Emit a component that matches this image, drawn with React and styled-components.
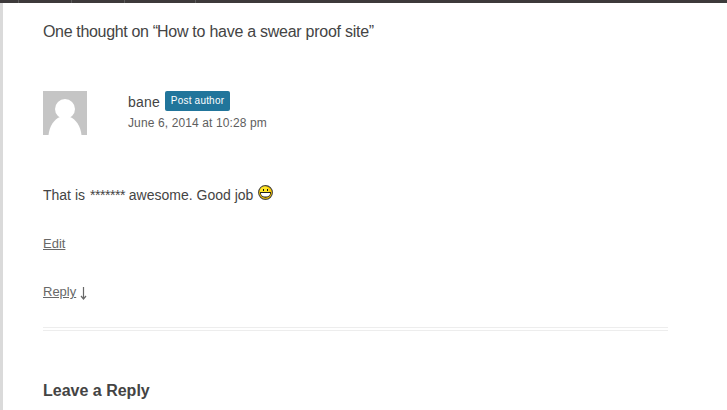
import React from 'react';
import styled, { createGlobalStyle } from 'styled-components';

const GlobalStyle = createGlobalStyle`
  * { box-sizing: border-box; }
  body {
    margin: 0;
    overflow: hidden;
    background: #fff;
    color: #444;
    font: 14px/24px "Liberation Sans", Arial, sans-serif;
  }
`;

const Page = styled.div`
  display: flex;
  flex-direction: column;
  width: 727px;
  height: 410px;
`;

const AdminBar = styled.div`
  display: flex;
  flex: none;
  height: 3px;
  background: #3d3a3b;
`;

const BarItem = styled.div`
  width: ${(p) => p.$width}px;
  border-right: 1px solid #5b5b5b;
`;

const Content = styled.main`
  flex: 1;
  min-height: 0;
  border-left: 3px solid #dadada;
  padding: 17px 59px 0 40px;
`;

const Title = styled.h2`
  margin: 0 0 47px;
  font-size: 16px;
  font-weight: 400;
  line-height: 24px;
  white-space: nowrap;
  letter-spacing: -0.26px;
`;

const Quote = styled.span`
  letter-spacing: -1.2px;
`;

const Lead = styled.span`
  letter-spacing: -0.33px;
`;

const CommentHeader = styled.header`
  display: flex;
  gap: 41px;
  height: 92px;
`;

const Avatar = styled.svg`
  display: block;
  flex: none;
  width: 44px;
  height: 44px;
`;

const AuthorLine = styled.div`
  display: flex;
  gap: 5px;
  height: 20px;
  line-height: 22px;
`;

const AuthorName = styled.span`
  width: 32px;
  letter-spacing: 0.2px;
`;

const Badge = styled.span`
  width: 65px;
  height: 20px;
  border-radius: 2px;
  background: #21759b;
  color: #fff;
  font-size: 10px;
  line-height: 20px;
  letter-spacing: 0.2px;
  text-align: center;
  white-space: nowrap;
`;

const Time = styled.time`
  display: block;
  color: #5e5e5e;
  font-size: 12px;
  line-height: 24px;
  letter-spacing: 0.12px;
`;

const CommentText = styled.p`
  display: flex;
  margin: 0 0 25px;
  height: 24px;
  white-space: pre;
`;

const Message = styled.span`
  width: 215px;
`;

const Censored = styled.span`
  margin-left: 1px;
  letter-spacing: -0.45px;
`;

const Smiley = styled.svg`
  width: 15px;
  height: 15px;
  margin-top: 2px;
`;

const Action = styled.div`
  display: flex;
  gap: 4px;
  height: 24px;
  margin-bottom: 24px;
  color: #686868;
  font-size: 13px;
`;

const ActionLink = styled.a`
  color: #686868;
  text-decoration: underline;
`;

const Arrow = styled.svg`
  width: 7px;
  height: 13px;
  margin-top: 7px;
`;

const Rule = styled.hr`
  height: 4px;
  margin: -1px 0 48px;
  border: solid #ededed;
  border-width: 1px 0;
`;

const ReplyTitle = styled.h3`
  margin: 0;
  font-size: 16px;
  line-height: 24px;
`;

export default function App() {
  return (
    <>
      <GlobalStyle />
      <Page>
        <AdminBar>
          <BarItem $width={19} />
          <BarItem $width={53} />
          <BarItem $width={53} />
          <BarItem $width={71} />
        </AdminBar>
        <Content>
          <Title>
            <Lead>One thought on </Lead>
            <Quote>“</Quote>How to have a swear proof site”
          </Title>
          <CommentHeader>
            <Avatar viewBox="0 0 44 44">
              <path fill="#c5c5c5" d="M0 0h44v44H0z" />
              <circle cx="22" cy="18" r="10" fill="#fff" />
              <path fill="#fff" d="M5.500 44C6.500 35 11 28.500 17 26h10c6 2.500 10.500 9 11.500 18z" />
            </Avatar>
            <div>
              <AuthorLine>
                <AuthorName>bane</AuthorName>
                <Badge>Post author</Badge>
              </AuthorLine>
              <Time>June 6, 2014 at 10:28 pm</Time>
            </div>
          </CommentHeader>
          <CommentText>
            <Message>
              That is <Censored>*******</Censored> awesome. Good job
            </Message>
            <Smiley viewBox="0 0 15 15">
              <circle cx="7.5" cy="7.5" r="6.9" fill="#fc0" stroke="#444" strokeWidth="1.1" />
              <circle cx="6.5" cy="6" r="4.6" fill="#ffe628" />
              <path d="M5 4h1v2H5zM9 4h1v2H9z" fill="#111" />
              <path d="M2 7h11c0 3.500-2.200 5.700-5.500 5.700S2 10.500 2 7z" fill="#222" />
              <path d="M3 8h9v1c-.5 1.800-2 2.600-4.500 2.600S3.500 10.800 3 9z" fill="#fff" />
            </Smiley>
          </CommentText>
          <Action>
            <ActionLink>Edit</ActionLink>
          </Action>
          <Action>
            <ActionLink>Reply</ActionLink>
            <Arrow viewBox="0 0 7 13">
              <path d="M3.500 0v12M1 9l2.500 3L6 9" fill="none" stroke="#686868" strokeWidth="1.2" />
            </Arrow>
          </Action>
          <Rule />
          <ReplyTitle>Leave a Reply</ReplyTitle>
        </Content>
      </Page>
    </>
  );
}
